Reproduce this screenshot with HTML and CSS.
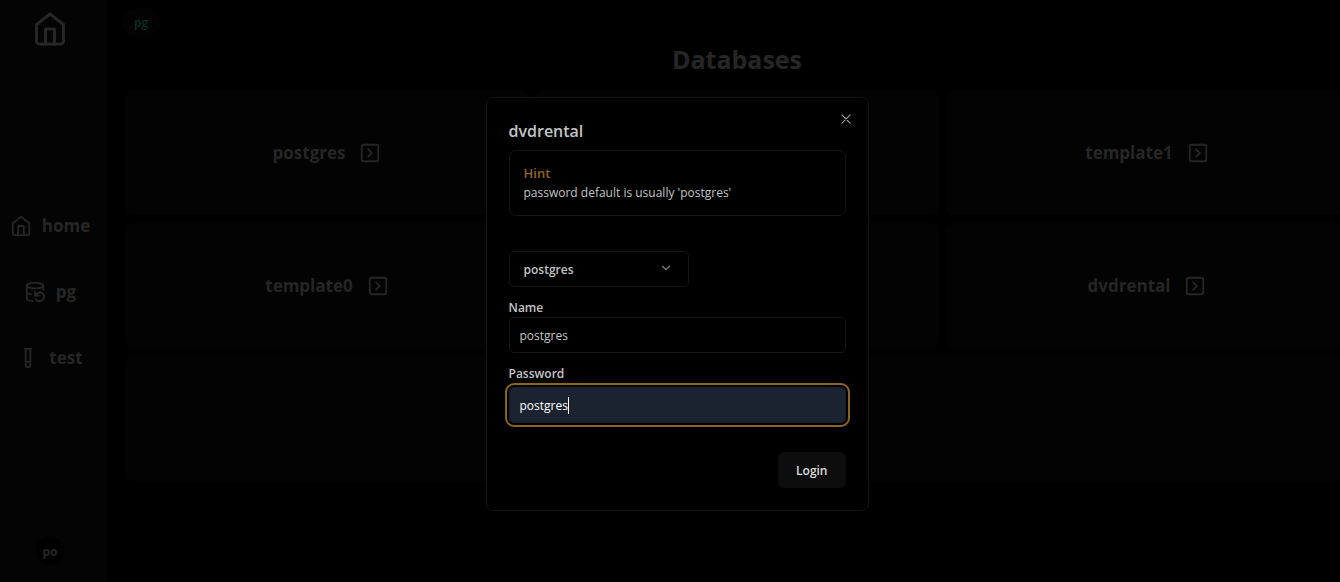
FILE: index.html
```html
<!DOCTYPE html>
<html lang="en">
<head>
<meta charset="utf-8">
<meta name="viewport" content="width=device-width, initial-scale=1">
<title>Databases</title>
<link rel="stylesheet" href="styles.css">
</head>
<body>
<svg class="sprite" aria-hidden="true">
  <symbol id="house" viewBox="0 0 24 24"><path d="m3 9 9-7 9 7v11a2 2 0 0 1-2 2H5a2 2 0 0 1-2-2z"/><path d="M9 22V12h6v10"/></symbol>
  <symbol id="database" viewBox="0 0 24 24"><ellipse cx="12" cy="5" rx="9" ry="3"/><path d="M3 12a9 3 0 0 0 5 2.69"/><path d="M21 9.3V5"/><path d="M3 5v14a9 3 0 0 0 6.47 2.88"/><path d="M12 12v4h4"/><path d="M13 20a5 5 0 0 0 9-3 4.5 4.5 0 0 0-4.5-4.5c-1.33 0-2.54.54-3.41 1.41L12 16"/></symbol>
  <symbol id="tube" viewBox="0 0 24 24"><path d="M14.5 2v17.5c0 1.4-1.1 2.5-2.5 2.5s-2.5-1.1-2.5-2.5V2"/><path d="M8.5 2h7"/><path d="M14.5 16h-5"/></symbol>
  <symbol id="square-chevron" viewBox="0 0 24 24"><rect x="3" y="3" width="18" height="18" rx="2"/><path d="m10 8 4 4-4 4"/></symbol>
  <symbol id="chevron" viewBox="0 0 24 24"><path d="m6 9 6 6 6-6"/></symbol>
  <symbol id="close" viewBox="0 0 24 24"><path d="m5 5 14 14M19 5 5 19"/></symbol>
</svg>
<div class="app">
  <aside class="sidebar">
    <a class="logo" href="#" aria-label="Home"><svg class="icon icon-logo"><use href="#house"/></svg></a>
    <nav class="nav">
      <a href="#"><svg class="icon icon-md"><use href="#house"/></svg>home</a>
      <a href="#"><svg class="icon icon-md"><use href="#database"/></svg>pg</a>
      <a href="#"><svg class="icon icon-md"><use href="#tube"/></svg>test</a>
    </nav>
    <button class="avatar" type="button">po</button>
  </aside>
  <main class="main">
    <a class="badge" href="#">pg</a>
    <div class="content">
      <h1>Databases</h1>
      <div class="grid">
        <a class="card" href="#">postgres<svg class="icon icon-md"><use href="#square-chevron"/></svg></a>
        <div class="card"></div>
        <a class="card" href="#">template1<svg class="icon icon-md"><use href="#square-chevron"/></svg></a>
        <a class="card" href="#">template0<svg class="icon icon-md"><use href="#square-chevron"/></svg></a>
        <div class="card"></div>
        <a class="card" href="#">dvdrental<svg class="icon icon-md"><use href="#square-chevron"/></svg></a>
        <div class="card card-wide"></div>
      </div>
    </div>
  </main>
</div>
<div class="overlay">
  <form class="dialog" role="dialog" aria-modal="true" aria-labelledby="dialog-title">
    <button class="close" type="button" aria-label="Close"><svg class="icon icon-sm"><use href="#close"/></svg></button>
    <h2 id="dialog-title">dvdrental</h2>
    <div class="hint">
      <h3>Hint</h3>
      <p>password default is usually 'postgres'</p>
    </div>
    <div class="select">
      <select aria-label="User"><option>postgres</option></select>
      <svg class="icon icon-sm"><use href="#chevron"/></svg>
    </div>
    <div class="field">
      <label for="name">Name</label>
      <input id="name" type="text" value="postgres">
    </div>
    <div class="field field-active">
      <label for="password">Password</label>
      <div class="control">
        <input id="password" type="text" value="postgres" autocomplete="off">
        <span class="caret"></span>
      </div>
    </div>
    <button class="login" type="submit">Login</button>
  </form>
</div>
</body>
</html>
```
FILE: styles.css
```css
* { box-sizing: border-box; }
body, h1, h2, h3, p { margin: 0; }
body {
  background: #000;
  color: #262626;
  font-family: "Open Sans", "Noto Sans", sans-serif;
  font-size: 12px;
  overflow: hidden;
}
a { color: inherit; text-decoration: none; }
button, input, select { font: inherit; color: inherit; }
.sprite { display: none; }
.icon { fill: none; stroke: currentColor; stroke-width: 2; stroke-linecap: round; stroke-linejoin: round; flex: none; }
.icon-logo { width: 36px; height: 36px; display: block; }
.icon-md { width: 22px; height: 22px; }
.icon-sm { width: 14px; height: 14px; display: block; }

.app { display: flex; min-height: 100vh; }
.sidebar {
  width: 107px;
  flex: none;
  display: flex;
  flex-direction: column;
  align-items: center;
  justify-content: space-between;
  padding: 11px 7px 17px 0;
  background: #040404;
}
.nav { display: flex; flex-direction: column; align-items: center; gap: 42px; }
.nav a { display: flex; align-items: center; gap: 10px; font-size: 17px; line-height: 24px; font-weight: 700; }
.avatar { width: 28px; height: 28px; border: 0; border-radius: 50%; padding: 0; background: #000; font-weight: 700; }

.main { flex: 1; min-width: 0; padding: 8px 0 0 15px; }
.badge {
  display: flex;
  align-items: center;
  justify-content: center;
  width: 38px;
  height: 28px;
  border-radius: 14px;
  background: #030303;
  color: #08301f;
  font-weight: 600;
}
.content { margin: 6px -8px 0 4px; }
h1 { font-size: 25px; line-height: 34px; text-align: center; margin-bottom: 14px; }
.grid { display: grid; grid-template-columns: repeat(3, 1fr); gap: 8px; }
.card {
  display: flex;
  align-items: center;
  justify-content: center;
  gap: 14px;
  height: 125px;
  border-radius: 7px;
  background: #030303;
  font-size: 17px;
  font-weight: 700;
}
.card-wide { grid-column: 1 / -1; }

.overlay {
  position: fixed;
  inset: 0;
  display: flex;
  align-items: center;
  justify-content: center;
  padding: 26px 0 0 14px;
}
.dialog {
  position: relative;
  display: flex;
  flex-direction: column;
  width: 383px;
  padding: 22px;
  border: 1px solid #141414;
  border-radius: 7px;
  background: #000;
  color: #c4c4c4;
}
.close { position: absolute; top: 14px; right: 15px; padding: 0; border: 0; background: none; color: #a0a0a0; }
h2 { font-size: 16px; line-height: 22px; font-weight: 600; margin-bottom: 8px; }
.hint { border: 1px solid #151515; border-radius: 7px; padding: 13px 14px; margin-bottom: 35px; }
.hint h3 { font-size: 13px; line-height: 18px; margin-bottom: 2px; font-weight: 600; color: #8f6422; }
.hint p { line-height: 18px; }
.select { position: relative; width: 180px; margin-bottom: 13px; }
.select select {
  appearance: none;
  display: block;
  width: 100%;
  height: 36px;
  padding: 0 14px;
  border: 1px solid #151515;
  border-radius: 5px;
  background: #000;
  font-weight: 600;
}
.select .icon { position: absolute; right: 16px; top: 10px; color: #777; }
.field { display: flex; flex-direction: column; margin-bottom: 13px; }
.field label { line-height: 16px; font-weight: 600; margin-bottom: 1px; }
.field input {
  display: block;
  width: 100%;
  height: 36px;
  padding: 1px 10px 0;
  border: 1px solid #151515;
  border-radius: 5px;
  background: #000;
}
.control { position: relative; }
.field-active { margin-bottom: 29px; }
.field-active label { margin-bottom: 5px; }
.field-active input { border-color: #171d29; background: #1b2331; color: #fff; outline: 2px solid #8b6420; outline-offset: 2px; }
.caret { position: absolute; left: 59px; top: 10px; width: 1px; height: 17px; background: #fff; }
.login {
  align-self: flex-end;
  height: 36px;
  padding: 0 18px;
  border: 0;
  border-radius: 6px;
  background: #0d0d0d;
  color: #dcdcdc;
  font-weight: 600;
}
```
